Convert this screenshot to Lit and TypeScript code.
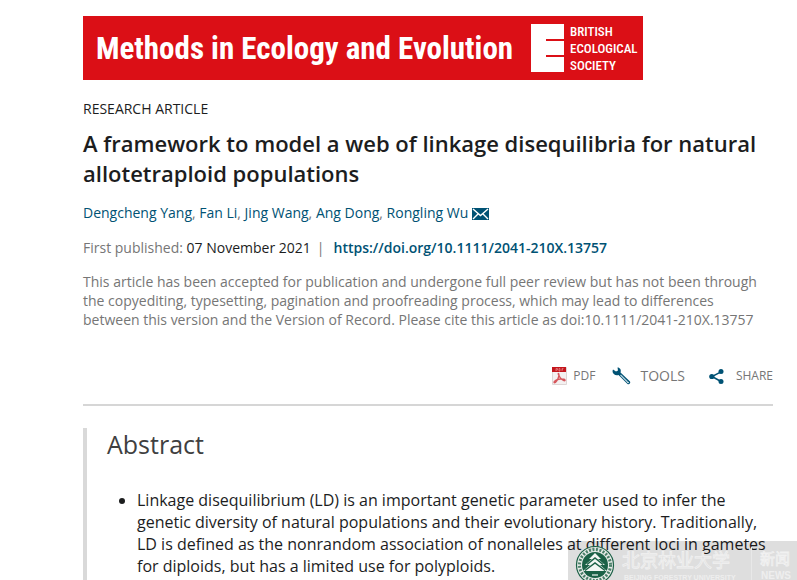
import { LitElement, html, css } from "lit";
import { customElement } from "lit/decorators.js";

const authors = ["Dengcheng Yang", "Fan Li", "Jing Wang", "Ang Dong", "Rongling Wu"];

@customElement("app-root")
export class AppRoot extends LitElement {
  static styles = css`
    :host {
      display: block;
      position: relative;
      height: 100vh;
      overflow: hidden;
      background: #fff;
      color: #1c1d1e;
      font: 14px/20px "Open Sans", sans-serif;
    }
    a { color: #005274; text-decoration: none; }
    h1, h2, p, ul { margin: 0; }
    svg { display: block; flex: none; }
    .page { padding: 16px 24px 0 83px; }
    .banner {
      display: flex;
      align-items: center;
      box-sizing: border-box;
      max-width: 560px;
      height: 64px;
      padding: 0 8px 0 13px;
      background: #db0f16;
      color: #fff;
      font-family: "Roboto Condensed", "Liberation Sans Narrow", "Roboto", sans-serif;
      font-weight: 700;
      white-space: nowrap;
    }
    .journal { flex: 1; padding-top: 2px; font-size: 31px; line-height: 40px; }
    .mark { width: 33px; height: 48px; margin-right: 6px; }
    .society { width: 65px; font-size: 13px; line-height: 17px; font-weight: 500; }
    .kind { margin-top: 19px; }
    h1 { margin-top: 9px; font-size: 22px; line-height: 30px; font-weight: 600; }
    .authors { display: flex; align-items: center; margin-top: 15px; color: #767676; }
    .authors svg { width: 17px; height: 12px; margin: 2px 0 0 4px; }
    .published { margin-top: 15px; }
    .muted { color: #767676; }
    .sep { margin: 0 9px 0 6px; color: #767676; }
    .doi { font-weight: 600; }
    .note { margin-top: 14px; color: #767676; line-height: 19px; }
    .tools {
      display: flex;
      justify-content: flex-end;
      align-items: center;
      height: 56px;
      margin-top: 19px;
      border-bottom: 2px solid #d6d6d6;
    }
    button {
      display: flex;
      align-items: center;
      padding: 0;
      border: 0;
      background: none;
      color: #767676;
      font: 12px/20px "Open Sans", sans-serif;
    }
    .pdf { gap: 6px; margin-right: 17px; }
    .wrench { gap: 9px; margin-right: 24px; font-size: 14px; }
    .share { gap: 12px; }
    .abstract { margin-top: 22px; border-left: 4px solid #d9d9d9; padding: 0 0 40px 20px; }
    h2 { font-size: 25px; line-height: 32px; font-weight: 400; color: #404040; }
    .abstract ul { margin-top: 29px; padding-left: 30px; font-size: 16px; line-height: 22px; }
    .watermark { position: absolute; right: 0; bottom: 0; width: 229px; height: 39px; }
    .cjk { font-family: "Noto Sans CJK SC", sans-serif; font-size: 18px; }
    .latin { font-family: "Liberation Sans", sans-serif; font-weight: 700; font-size: 7px; }
    .news { font-size: 15px; }
    .big { font-size: 10px; }
  `;

  render() {
    return html`
      <main class="page">
        <header class="banner">
          <span class="journal">Methods in Ecology and Evolution</span>
          <svg class="mark" viewBox="0 0 33 48" aria-hidden="true">
            <path d="M0 0H33V15H15V17H33V31H15V33H33V48H0Z" fill="#fff" />
          </svg>
          <span class="society">BRITISH<br />ECOLOGICAL<br />SOCIETY</span>
        </header>
        <p class="kind">RESEARCH ARTICLE</p>
        <h1>A framework to model a web of linkage disequilibria for natural allotetraploid populations</h1>
        <div class="authors">
          <span>${authors.map((a, i) => html`${i ? ", " : ""}<a href="#">${a}</a>`)}</span>
          <svg viewBox="0 0 17 12" aria-hidden="true">
            <rect width="17" height="12" fill="#005274" />
            <path d="M1 1L8.500 7.500L16 1M1 11L6 6M16 11L11 6" fill="none" stroke="#fff" stroke-width="1.400" />
          </svg>
        </div>
        <p class="published"><span class="muted">First published:</span> 07 November 2021<span class="sep">|</span><a class="doi" href="#">https://doi.org/10.1111/2041-210X.13757</a></p>
        <p class="note">This article has been accepted for publication and undergone full peer review but has not been through the copyediting, typesetting, pagination and proofreading process, which may lead to differences between this version and the Version of Record. Please cite this article as doi:10.1111/2041-210X.13757</p>
        <div class="tools">
          <button class="pdf">
            <svg width="15" height="18" viewBox="0 0 15 18" aria-hidden="true">
              <path d="M.5.5H14.500V17.500H.5Z" fill="#f4f0f0" stroke="#ddd6d6" />
              <rect width="14" height="5" fill="#c4161c" />
              <path d="M4 1.500V4M4 1.500H5.500V3H4M7 1.500V4H8V1.500ZM10 4V1.500H11.500M10 2.700H11" fill="none" stroke="#e88e90" stroke-width=".7" />
              <path d="M6 6.500C7.500 6 7 9 6 11.500C5 14 3 16.500 2 15.500C1.500 14 5 12.500 8 12C11 11.600 13.500 12.500 13 13.500C12 14.500 8 11.500 7 8.500C6.600 7.500 6 7 6 6.500" fill="none" stroke="#d6555b" stroke-width="1.300" />
            </svg>
            PDF
          </button>
          <button class="wrench">
            <svg width="19" height="18" viewBox="0 0 19 18" aria-hidden="true">
              <path d="M1 2.500L4 4.500L6 3.500L5.500 0.500C8 .5 9.500 3 8.500 5.500L18 14.500C19 16 17 18 15.500 17L6.500 8C3.500 9 .5 7 .5 4Z" fill="#005274" />
              <path d="M8.500 8L15.500 15" stroke="#b5d0dc" stroke-width="1.200" />
              <circle cx="16" cy="15.500" r=".8" fill="#fff" />
            </svg>
            TOOLS
          </button>
          <button class="share">
            <svg width="15" height="15" viewBox="0 0 15 15" aria-hidden="true">
              <path d="M12 2.800L3 7.500L12 12.500" fill="none" stroke="#005274" stroke-width="1.500" />
              <g fill="#005274"><circle cx="12" cy="2.600" r="2.500" /><circle cx="2.800" cy="7.500" r="2.600" /><circle cx="12" cy="12.400" r="2.500" /></g>
            </svg>
            SHARE
          </button>
        </div>
        <section class="abstract">
          <h2>Abstract</h2>
          <ul><li>Linkage disequilibrium (LD) is an important genetic parameter used to infer the genetic diversity of natural populations and their evolutionary history. Traditionally, LD is defined as the nonrandom association of nonalleles at different loci in gametes for diploids, but has a limited use for polyploids.</li></ul>
        </section>
      </main>
      <svg class="watermark" viewBox="0 0 229 39">
        <rect width="229" height="39" fill="#000" fill-opacity=".13" />
        <circle cx="27" cy="24" r="18.500" fill="#e8eeea" fill-opacity=".8" stroke="#1b6146" stroke-width="1.200" />
        <circle cx="27" cy="24" r="15.500" fill="none" stroke="#4b8069" stroke-width="3" stroke-dasharray="2 1.500" />
        <circle cx="27" cy="24" r="13" fill="#1b6146" />
        <path d="M27 12L21 18H24L17 24H22L15 30H39L32 24H37L30 18H33Z" fill="#f2f6f3" />
        <path d="M19 23.500L27 17L35 23.500M17 29.500L27 22L37 29.500" fill="none" stroke="#1b6146" stroke-width="1.500" />
        <path d="M24 34H30" stroke="#c7d9d0" stroke-width="1.500" />
        <g fill="#dedede" stroke="#f1f1f1" stroke-width=".8">
          <text class="cjk" x="54" y="26">北京林业大学</text>
          <text class="cjk news" x="192" y="23">新闻</text>
        </g>
        <g fill="#eee">
          <text class="latin" x="56" y="39">BEIJING FORESTRY UNIVERSITY</text>
          <text class="latin big" x="193" y="38">NEWS</text>
        </g>
        <path d="M183.500 6V39" stroke="#e8e8e8" />
      </svg>`;
  }
}
